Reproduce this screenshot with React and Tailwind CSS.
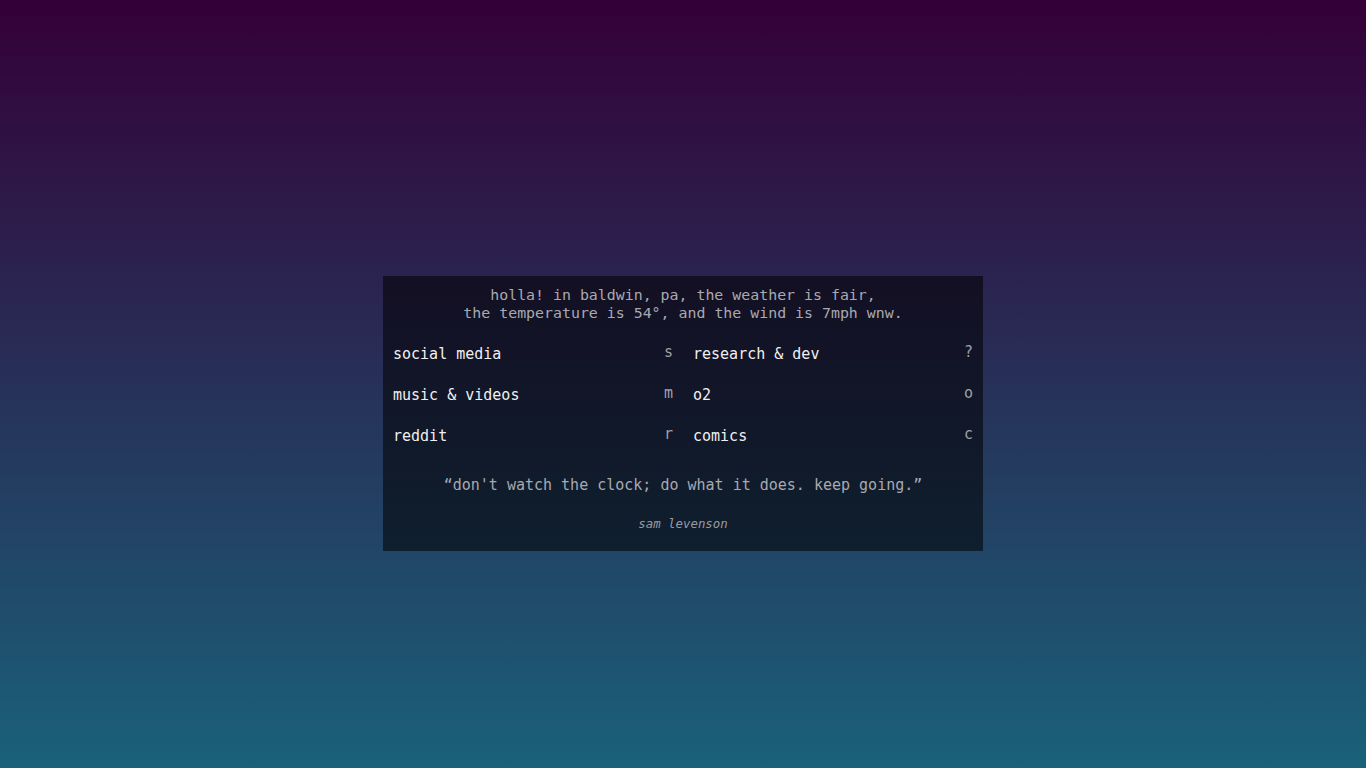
import React from "react";

const links = [
  ["social media", "s", "research & dev", "?"],
  ["music & videos", "m", "o2", "o"],
  ["reddit", "r", "comics", "c"],
];

export default function App() {
  return (
    <div
      className="w-full h-[768px] flex justify-center pt-[276px] bg-[linear-gradient(to_bottom,#340038,#1a6179)]"
      style={{ fontFamily: '"DejaVu Sans Mono", "Liberation Mono", monospace' }}
    >
      <div className="w-[600px] h-[275px] bg-black/55 flex flex-col pt-[10px] px-[10px]">
        <div className="text-center text-[14.9px] leading-[18px] text-[#a9a9b0]">
          <div>holla! in baldwin, pa, the weather is fair,</div>
          <div>the temperature is 54°, and the wind is 7mph wnw.</div>
        </div>
        <div className="mt-[12px] grid grid-cols-2">
          {links.map((r, i) => (
            <React.Fragment key={i}>
              <div className="h-[41px] flex items-center justify-between pr-[10px] text-[15px]">
                <span className="text-[#f0f0f0]">{r[0]}</span>
                <span className="text-[#a0a0a8] -translate-y-[2px]">{r[1]}</span>
              </div>
              <div className="h-[41px] flex items-center justify-between pl-[10px] text-[15px]">
                <span className="text-[#f0f0f0]">{r[2]}</span>
                <span className="text-[#a0a0a8] -translate-y-[2px]">{r[3]}</span>
              </div>
            </React.Fragment>
          ))}
        </div>
        <div className="mt-[18px] text-center text-[15px] leading-[20px] text-[#a9a9b0]">
          “don't watch the clock; do what it does. keep going.”
        </div>
        <div className="mt-[21px] text-center text-[12.4px] leading-[16px] italic text-[#9a9aa2]">
          sam levenson
        </div>
      </div>
    </div>
  );
}
